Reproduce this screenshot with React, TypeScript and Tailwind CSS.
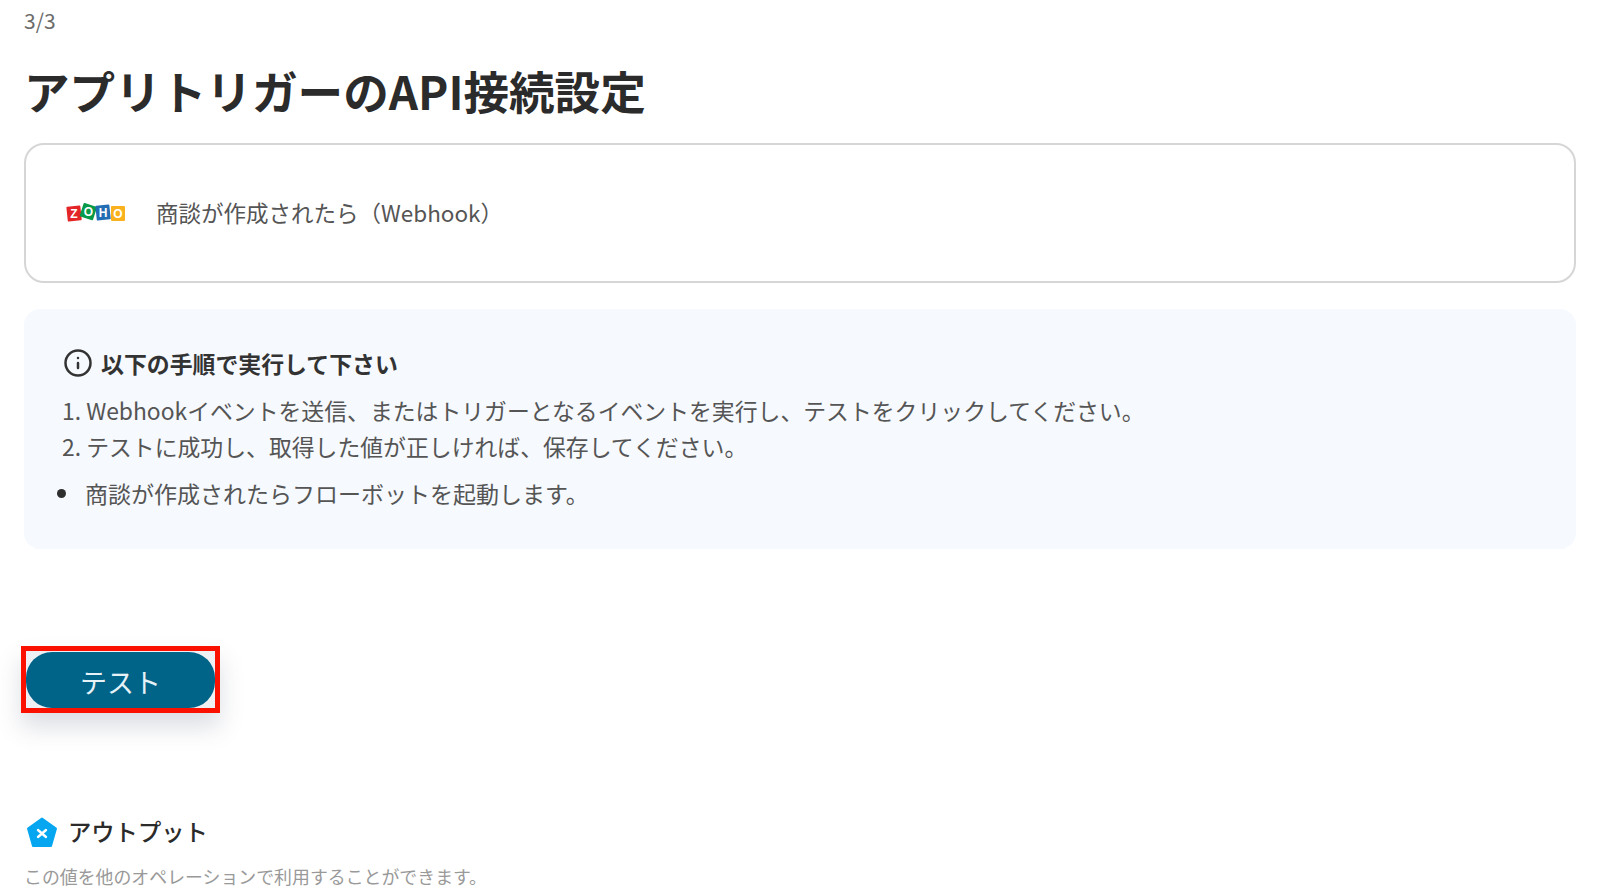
import { Info } from "lucide-react";

const ZohoLogo = () => (
  <svg width="60" height="22" viewBox="0 0 60 22" className="shrink-0">
    <rect x="1" y="4" width="14" height="15" rx="1" fill="#e42527" transform="rotate(-6 8 11)" />
    <rect x="15.5" y="2.5" width="14" height="14" rx="1" fill="#089949" transform="rotate(18 22 9)" />
    <rect x="30" y="3" width="14" height="15" rx="1" fill="#226db4" transform="rotate(-6 37 10)" />
    <rect x="45" y="4" width="14" height="15" rx="1" fill="#f9b21d" />
    <text x="8" y="16" fontSize="12" fontWeight="700" fill="#fff" textAnchor="middle" fontFamily="Liberation Sans">Z</text>
    <text x="22.5" y="14" fontSize="12" fontWeight="700" fill="#fff" textAnchor="middle" fontFamily="Liberation Sans">O</text>
    <text x="37" y="15" fontSize="12" fontWeight="700" fill="#fff" textAnchor="middle" fontFamily="Liberation Sans">H</text>
    <text x="52" y="16" fontSize="12" fontWeight="700" fill="#fff" textAnchor="middle" fontFamily="Liberation Sans">O</text>
  </svg>
);

const OutputIcon = () => (
  <svg width="32" height="32" viewBox="0 0 32 32" className="mt-[4px] shrink-0">
    <path d="M16 1.5 30 11.5 25 29 7 29 2 11.5Z" fill="#06a6f0" stroke="#06a6f0" strokeWidth="2" strokeLinejoin="round" />
    <path d="M12 13l8 7M20 13l-8 7" stroke="#fff" strokeWidth="2.4" strokeLinecap="round" />
  </svg>
);

export default function App() {
  return (
    <div className="h-[896px] w-[1600px] overflow-hidden bg-white pl-6 pr-6 font-['Noto_Sans_CJK_JP','Noto_Sans',sans-serif] text-[#2e2e2e]">
      <p className="pt-[6px] text-[21px] leading-[28px] text-[#6b6b6b]">3/3</p>

      <h1 className="mt-[26px] text-[45.6px] font-bold leading-[60px] text-[#2b2b2b]">アプリトリガーのAPI接続設定</h1>

      <div className="mt-[23px] flex h-[140px] w-[1552px] items-center gap-[30px] rounded-[20px] border-2 border-[#d6d6d6] pl-[40px]">
        <ZohoLogo />
        <span className="text-[22.5px] text-[#555555]">商談が作成されたら（Webhook）</span>
      </div>

      <div className="mt-[26px] h-[240px] w-[1552px] rounded-[16px] bg-[#f6f9fd] pl-[39px] pt-[36px] text-[#555555]">
        <div className="flex h-[36px] items-center gap-[8px]">
          <Info size={30} strokeWidth={2} className="text-[#333333]" />
          <span className="text-[22.9px] font-bold text-[#333333]">以下の手順で実行して下さい</span>
        </div>
        <ol className="ml-[-1px] mt-[11px] text-[22.85px] leading-[36px]">
          <li>1. Webhookイベントを送信、またはトリガーとなるイベントを実行し、テストをクリックしてください。</li>
          <li>2. テストに成功し、取得した値が正しければ、保存してください。</li>
        </ol>
        <div className="ml-[-1px] mt-[11px] flex h-[36px] items-center">
          <span className="ml-[-5px] h-[9px] w-[9px] rounded-full bg-[#2e2e2e]" />
          <span className="ml-[19px] text-[23px]">商談が作成されたらフローボットを起動します。</span>
        </div>
      </div>

      <div className="ml-[-3px] mt-[97px] w-[199px] border-[5px] border-[#fa1100] bg-[#eef0f4] pt-[1px] shadow-[0_14px_24px_rgba(60,70,100,0.18)]">
        <button className="block h-[56px] w-full rounded-[26px] bg-[#006388] pt-[4px] text-[27px] text-[#e6f2f6]">テスト</button>
      </div>

      <div className="mt-[100px] flex h-[36px] items-center gap-[10px] pl-[2px]">
        <OutputIcon />
        <span className="text-[23.3px] font-medium text-[#2b2b2b]">アウトプット</span>
      </div>
      <p className="mt-[14px] text-[17.9px] text-[#999999]">この値を他のオペレーションで利用することができます。</p>
    </div>
  );
}
